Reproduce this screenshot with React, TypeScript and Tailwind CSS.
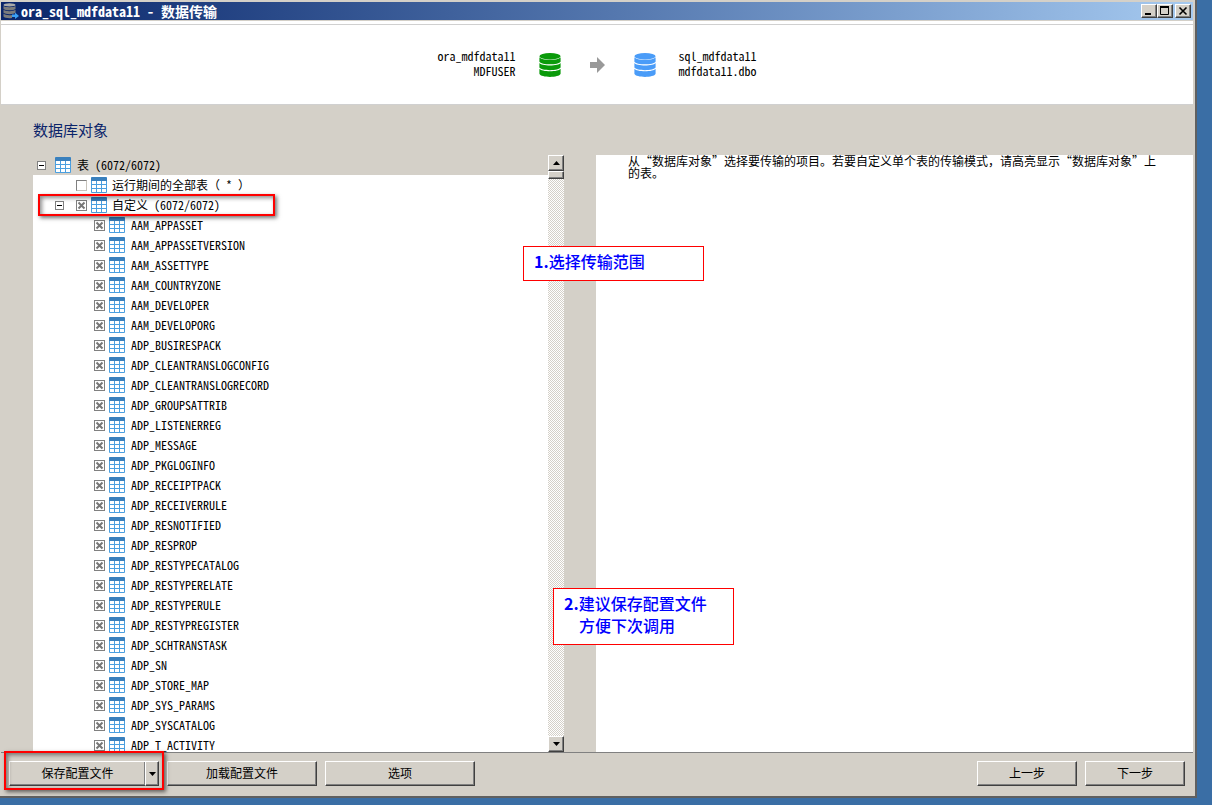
import React from 'react';
import clsx from 'clsx';

const tables = [
  'AAM_APPASSET',
  'AAM_APPASSETVERSION',
  'AAM_ASSETTYPE',
  'AAM_COUNTRYZONE',
  'AAM_DEVELOPER',
  'AAM_DEVELOPORG',
  'ADP_BUSIRESPACK',
  'ADP_CLEANTRANSLOGCONFIG',
  'ADP_CLEANTRANSLOGRECORD',
  'ADP_GROUPSATTRIB',
  'ADP_LISTENERREG',
  'ADP_MESSAGE',
  'ADP_PKGLOGINFO',
  'ADP_RECEIPTPACK',
  'ADP_RECEIVERRULE',
  'ADP_RESNOTIFIED',
  'ADP_RESPROP',
  'ADP_RESTYPECATALOG',
  'ADP_RESTYPERELATE',
  'ADP_RESTYPERULE',
  'ADP_RESTYPREGISTER',
  'ADP_SCHTRANSTASK',
  'ADP_SN',
  'ADP_STORE_MAP',
  'ADP_SYS_PARAMS',
  'ADP_SYSCATALOG',
  'ADP_T_ACTIVITY',
];

const raised =
  'bg-[#d4d0c8] border border-t-white border-l-white border-r-[#404040] border-b-[#404040] shadow-[inset_-1px_-1px_0_#808080]';

const highlight =
  'absolute border-2 border-[#f00] shadow-[2px_2px_4px_rgba(0,0,0,0.55),inset_2px_2px_4px_rgba(0,0,0,0.45)] pointer-events-none';

function TableIcon() {
  return (
    <svg width="16" height="16" viewBox="0 0 16 16" className="shrink-0">
      <rect width="16" height="16" rx="1" fill="#4a9fe0" />
      <path d="M1 0H15L16 1V4H0V1Z" fill="#3a80bd" />
      {[4, 8, 12].map((y) =>
        [1, 6, 11].map((x) => <rect key={`${x}-${y}`} x={x} y={y} width="4" height="3" fill="#fff" />)
      )}
    </svg>
  );
}

function DatabaseIcon({ color }: { color: string }) {
  return (
    <svg width="22" height="24" viewBox="0 0 22 24" fill={color} className="shrink-0">
      <ellipse cx="11" cy="3.2" rx="10.6" ry="3.2" />
      <path d="M.4 4.2C2 7.6 20 7.6 21.6 4.2V8.8C20 12.200 2 12.200 .4 8.8Z" />
      <path d="M.4 10C2 13.3 20 13.3 21.6 10V14.6C20 18 2 18 .4 14.6Z" />
      <path d="M.4 15.8C2 19.1 20 19.1 21.6 15.8V20.8C20 25 2 25 .4 20.8Z" />
    </svg>
  );
}

function TransferIcon() {
  return (
    <svg width="16" height="16" viewBox="0 0 16 16" className="shrink-0">
      <ellipse cx="6.5" cy="1.9" rx="6" ry="1.7" fill="#aaa" />
      <g fill="#7c7c7c">
        <path d="M.5 3C2 4.600 11 4.600 12.500 3V6C11 7.800 2 7.800 .5 6Z" />
        <path d="M.5 6.800C2 8.600 11 8.600 12.500 6.800V9.800C11 11.600 2 11.600 .5 9.800Z" />
        <path d="M.5 10.600C2 12.400 7 12.500 9 12V15C6 15.500 1 15 .5 13.600Z" />
      </g>
      <path d="M9 11.500H12V9.500L16 13L12 16V14H9Z" fill="#3ba0f5" />
    </svg>
  );
}

function Expander({ label }: { label: string }) {
  return (
    <button
      type="button"
      aria-label={label}
      className="flex size-[9px] shrink-0 items-center justify-center border border-[#808080] bg-white"
    >
      <span className="h-px w-[5px] bg-black" />
    </button>
  );
}

function CheckBox({ id, checked }: { id: string; checked?: boolean }) {
  return (
    <span className="grid size-[11px] shrink-0">
      <input
        id={id}
        type="checkbox"
        defaultChecked={checked}
        className={clsx(
          'peer col-start-1 row-start-1 size-[11px] appearance-none border bg-white',
          checked ? 'border-[#808080]' : 'border-t-[#808080] border-l-[#808080] border-r-[#c8c4bc] border-b-[#c8c4bc]'
        )}
      />
      <svg
        viewBox="0 0 11 11"
        className="pointer-events-none invisible col-start-1 row-start-1 size-[11px] peer-checked:visible"
      >
        <path d="M2.500 2.500L8.500 8.500M8.500 2.500L2.500 8.500" stroke="#777" strokeWidth="2" />
      </svg>
    </span>
  );
}

function ScrollButton({ direction }: { direction: 'up' | 'down' }) {
  return (
    <button
      type="button"
      aria-label={direction === 'up' ? '向上滚动' : '向下滚动'}
      className={clsx(raised, 'flex size-4 shrink-0 items-center justify-center')}
    >
      <svg width="7" height="4" viewBox="0 0 7 4">
        <path d={direction === 'up' ? 'M0 4L3.500 0L7 4Z' : 'M0 0L3.500 4L7 0Z'} />
      </svg>
    </button>
  );
}

function TitleButton({ label, children }: { label: string; children: React.ReactNode }) {
  return (
    <button type="button" aria-label={label} className={clsx(raised, 'flex h-[14px] w-4 items-center justify-center')}>
      <svg width="10" height="10" viewBox="0 0 10 10" fill="none" stroke="#000">
        {children}
      </svg>
    </button>
  );
}

export default function App() {
  return (
    <div
      lang="zh-CN"
      className="h-screen overflow-hidden bg-[#3a6ea5] pr-[15px] pb-[7px] font-['Noto_Sans_CJK_SC',sans-serif] text-xs text-black"
    >
      <div className="flex h-full flex-col border-r-2 border-b-2 border-[#606060] bg-[#d4d0c8] pt-[2px] pr-[2px] pb-px pl-px">
        {/* Title bar */}
        <div className="mb-px flex h-[18px] shrink-0 items-center bg-gradient-to-r from-[#0a246a] to-[#a6caf0] px-[2px]">
          <TransferIcon />
          <h1 className="ml-[2px] flex-1 text-sm leading-4 font-bold text-white [font-feature-settings:'hwid']">
            ora_sql_mdfdata11 - 数据传输
          </h1>
          <TitleButton label="最小化">
            <path d="M1 8H7" strokeWidth="2" />
          </TitleButton>
          <TitleButton label="最大化">
            <path d="M0 1H9" strokeWidth="2" />
            <path d="M.5 1V8.500H8.500V1" />
          </TitleButton>
          <div className="w-[2px]" />
          <TitleButton label="关闭">
            <path d="M1.500 1.500L8.500 8.500M8.500 1.500L1.500 8.500" strokeWidth="1.600" />
          </TitleButton>
        </div>

        {/* Source and target */}
        <header className="shrink-0 border-b border-[#d0d0d0] bg-white">
          <div className="mt-[3px] flex h-20 items-center justify-center border-t border-[#d0d0d0] [font-feature-settings:'hwid']">
            <p className="pb-1 text-right leading-[15px]">
              ora_mdfdata11
              <br />
              MDFUSER
            </p>
            <div className="mx-[23px] flex items-center gap-[29px]">
              <DatabaseIcon color="#0a9a0a" />
              <svg width="15" height="16" viewBox="0 0 15 16" fill="#999">
                <path d="M0 5H7V0L15 8L7 16V11H0Z" />
              </svg>
              <DatabaseIcon color="#4a9cf8" />
            </div>
            <p className="pb-1 leading-[15px]">
              sql_mdfdata11
              <br />
              mdfdata11.dbo
            </p>
          </div>
        </header>

        <main className="relative flex min-h-0 flex-1 flex-col pt-[15px] pl-8">
          <h2 className="mb-[15px] text-[15px] leading-5 text-[#0a246a]">数据库对象</h2>
          <div className="flex min-h-0 flex-1">
            {/* Object tree */}
            <div className="flex w-[531px] shrink-0">
              <ul className="min-w-0 flex-1 overflow-hidden bg-white leading-[18px] [font-feature-settings:'hwid']">
                <li>
                  <div className="flex h-5 items-center bg-[#d4d0c8] pl-1">
                    <Expander label="折叠 表" />
                    <span className="ml-[9px] flex items-center gap-[6px]">
                      <TableIcon />表 (6072/6072)
                    </span>
                  </div>
                  <ul>
                    <li className="flex h-5 items-center pl-[43px]">
                      <CheckBox id="runtime" />
                      <label htmlFor="runtime" className="ml-1 flex items-center gap-[5px]">
                        <TableIcon />
                        <span className="[font-feature-settings:normal]">
                          运行期间的全部表（<span className="[font-feature-settings:'hwid']"> * </span>）
                        </span>
                      </label>
                    </li>
                    <li>
                      <div className="relative flex h-5 items-center pl-[22px]">
                        <Expander label="折叠 自定义" />
                        <span className="ml-3 flex items-center">
                          <CheckBox id="custom" checked />
                          <label htmlFor="custom" className="ml-1 flex items-center gap-[5px]">
                            <TableIcon />
                            自定义 (6072/6072)
                          </label>
                        </span>
                        <div className={clsx(highlight, '-inset-y-px left-[5px] w-[237px]')} />
                      </div>
                      <ul>
                        {tables.map((name) => (
                          <li key={name} className="flex h-5 items-center pl-[61px]">
                            <CheckBox id={name} checked />
                            <label htmlFor={name} className="ml-1 flex items-center gap-[6px]">
                              <TableIcon />
                              {name}
                            </label>
                          </li>
                        ))}
                      </ul>
                    </li>
                  </ul>
                </li>
              </ul>
              <div className="flex w-4 flex-col bg-[repeating-conic-gradient(#d4d0c8_0_25%,#fff_0_50%)] bg-[length:2px_2px]">
                <ScrollButton direction="up" />
                <div className={clsx(raised, 'h-2')} />
                <div className="mt-auto">
                  <ScrollButton direction="down" />
                </div>
              </div>
            </div>

            {/* Hint */}
            <section className="ml-8 min-w-0 flex-1 bg-white px-8 leading-3">
              从“数据库对象”选择要传输的项目。若要自定义单个表的传输模式，请高亮显示“数据库对象”上的表。
            </section>
          </div>

          {/* Step notes */}
          <p className="absolute top-[141px] left-[522px] h-[35px] w-[181px] border border-[#f00] bg-white px-[10px] py-[3px] text-base leading-[22px] font-medium text-[#00f]">
            <b>1.</b>选择传输范围
          </p>
          <p className="absolute top-[483px] left-[552px] h-[57px] w-[181px] border border-[#f00] bg-white px-[10px] py-[3px] text-base leading-[22px] font-medium text-[#00f]">
            <b>2.</b>建议保存配置文件
            <br />
            <span className="ml-[15px]">方便下次调用</span>
          </p>
        </main>

        <footer className="flex shrink-0 gap-2 border-t border-[#808080] px-2 pt-2 pb-[9px] leading-4">
          <div className="relative flex w-[150px]">
            <button type="button" className={clsx(raised, 'h-[25px] flex-1 border-r-0 pb-[2px]')}>
              保存配置文件
            </button>
            <button
              type="button"
              aria-label="更多保存选项"
              className={clsx(raised, 'flex h-[25px] w-[14px] items-center justify-center')}
            >
              <svg width="7" height="4" viewBox="0 0 7 4" className="shrink-0">
                <path d="M0 0L3.500 4L7 0Z" />
              </svg>
            </button>
            <div className={clsx(highlight, '-inset-x-[5px] -top-[10px] -bottom-1')} />
          </div>
          <button type="button" className={clsx(raised, 'h-[25px] w-[150px] pb-[2px]')}>
            加载配置文件
          </button>
          <button type="button" className={clsx(raised, 'h-[25px] w-[150px] pb-[2px]')}>
            选项
          </button>
          <button type="button" className={clsx(raised, 'ml-auto h-[25px] w-[100px] pb-[2px]')}>
            上一步
          </button>
          <button type="button" className={clsx(raised, 'h-[25px] w-[100px] pb-[2px]')}>
            下一步
          </button>
        </footer>
      </div>
    </div>
  );
}
